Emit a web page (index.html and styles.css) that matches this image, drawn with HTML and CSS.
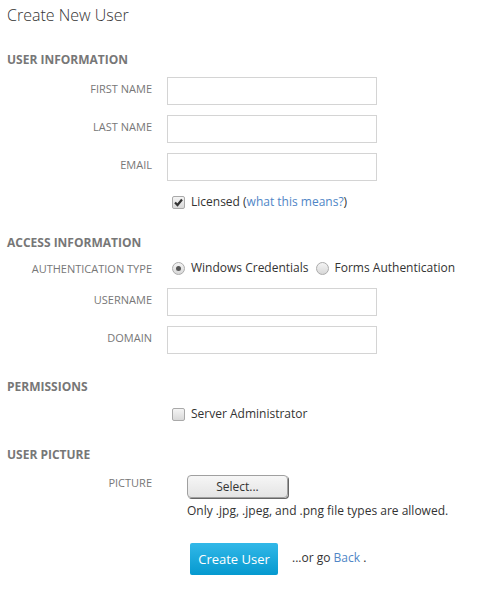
FILE: index.html
```html
<!DOCTYPE html>
<html>
<head>
<meta charset="utf-8">
<title>Create New User</title>
<link rel="stylesheet" href="styles.css">
</head>
<body>
<div class="page">
  <h1 class="title">Create New User</h1>

  <h2 class="section first">User Information</h2>
  <div class="row"><label class="lbl">First Name</label><input class="field" type="text"></div>
  <div class="row"><label class="lbl">Last Name</label><input class="field" type="text"></div>
  <div class="row"><label class="lbl">Email</label><input class="field" type="text"></div>
  <div class="row check-row">
    <span class="lbl"></span>
    <span class="opt"><span class="cbox"><svg width="11" height="11" viewBox="0 0 11 11"><path d="M2 5.5 L4.5 8 L9 2.5" fill="none" stroke="#333" stroke-width="2.2"/></svg></span>Licensed (<a href="#" class="link">what this means?</a>)</span>
  </div>

  <h2 class="section">Access Information</h2>
  <div class="row radio-row">
    <label class="lbl">Authentication Type</label>
    <span class="opt"><span class="radio on"></span>Windows Credentials</span>
    <span class="opt"><span class="radio"></span>Forms Authentication</span>
  </div>
  <div class="row"><label class="lbl">Username</label><input class="field" type="text"></div>
  <div class="row"><label class="lbl">Domain</label><input class="field" type="text"></div>

  <h2 class="section after-field">Permissions</h2>
  <div class="row check-row">
    <span class="lbl"></span>
    <span class="opt"><span class="cbox"></span>Server Administrator</span>
  </div>

  <h2 class="section">User Picture</h2>
  <div class="pic-row">
    <label class="lbl pic-lbl">Picture</label>
    <div class="pic-body">
      <button class="select-btn" type="button">Select...</button>
      <p class="hint">Only .jpg, .jpeg, and .png file types are allowed.</p>
    </div>
  </div>

  <div class="actions">
    <button class="primary" type="button">Create User</button>
    <span class="back">...or go <a href="#" class="link">Back</a> .</span>
  </div>
</div>
</body>
</html>
```

FILE: styles.css
```css
html, body {
  margin: 0;
  padding: 0;
  background: #fff;
}
body {
  font-family: "Open Sans", "Liberation Sans", sans-serif;
  color: #333;
  font-size: 12px;
}
.page {
  padding: 4px 7px;
}
.title {
  margin: 0;
  font-size: 16px;
  font-weight: 300;
  line-height: 22px;
  color: #333;
}
.section {
  margin: 23px 0 0 0;
  font-size: 12px;
  font-weight: 700;
  line-height: 16px;
  height: 16px;
  color: #777;
  text-transform: uppercase;
}
.section.first {
  margin-top: 26px;
}
.section.after-field {
  margin-top: 25px;
}
.row {
  display: flex;
  align-items: center;
  margin-top: 10px;
  height: 28px;
}
.section + .row {
  margin-top: 9px;
}
.lbl {
  width: 145px;
  flex: none;
  text-align: right;
  margin-right: 15px;
  font-size: 11px;
  line-height: 16px;
  color: #777;
  text-transform: uppercase;
}
.row .lbl {
  margin-bottom: 4px;
}
.field {
  width: 210px;
  height: 28px;
  box-sizing: border-box;
  border: 1px solid #d4d4d4;
  margin: 0;
  padding: 0 6px;
  background: #fff;
}
.check-row, .radio-row {
  height: 20px;
}
.row.check-row {
  margin-top: 11px;
}
.section + .row.check-row {
  margin-top: 9px;
}
.section + .row.radio-row {
  margin-top: 7px;
}
.radio-row .lbl {
  margin-bottom: 0;
  position: relative;
  top: 1px;
}
.radio-row + .row {
  margin-top: 10px;
}
.opt {
  display: inline-flex;
  align-items: center;
  font-size: 12px;
  line-height: 16px;
  color: #333;
  margin-right: 7px;
}
.check-row .opt {
  margin-left: 5px;
}
.cbox {
  width: 11px;
  height: 11px;
  border: 1px solid #a9a9a9;
  border-radius: 2px;
  background: linear-gradient(#f4f4f4, #d9d9d9);
  margin-right: 6px;
  display: inline-flex;
  align-items: center;
  justify-content: center;
}
.cbox svg { display: block; }
.radio {
  width: 11px;
  height: 11px;
  border: 1px solid #ababab;
  border-radius: 50%;
  background: linear-gradient(#f4f4f4, #d8d8d8);
  margin-right: 6px;
  position: relative;
}
.radio-row .opt:first-of-type {
  margin-left: 5px;
}
.radio.on::after {
  content: "";
  position: absolute;
  left: 3px;
  top: 3px;
  width: 5px;
  height: 5px;
  border-radius: 50%;
  background: #555;
}
.link {
  color: #4f86c6;
  text-decoration: none;
}
.pic-row {
  display: flex;
  align-items: flex-start;
  margin-top: 12px;
}
.pic-lbl {
  line-height: 16px;
  margin-right: 35px;
  width: 145px;
}
.pic-body {
  display: flex;
  flex-direction: column;
}
.select-btn {
  width: 101px;
  height: 23px;
  margin: 0;
  padding: 0;
  font-family: "Open Sans", "Liberation Sans", sans-serif;
  font-size: 12px;
  color: #333;
  border: 1px solid #a0a0a0;
  border-radius: 4px;
  background: linear-gradient(#f6f6f6, #e4e4e4);
  box-shadow: 1px 1px 0 #666;
}
.hint {
  margin: 5px 0 0 0;
  line-height: 16px;
  font-size: 12px;
  color: #333;
}
.actions {
  display: flex;
  align-items: center;
  margin-top: 24px;
  padding-left: 183px;
}
.primary {
  width: 88px;
  height: 32px;
  margin: 0 14px 0 0;
  padding: 0;
  border: none;
  border-radius: 2px;
  background: linear-gradient(#32b8e8, #0599cf);
  color: #fff;
  font-family: "Open Sans", "Liberation Sans", sans-serif;
  font-size: 13px;
}
.back {
  font-size: 12px;
  color: #333;
  position: relative;
  top: -2px;
}
```
